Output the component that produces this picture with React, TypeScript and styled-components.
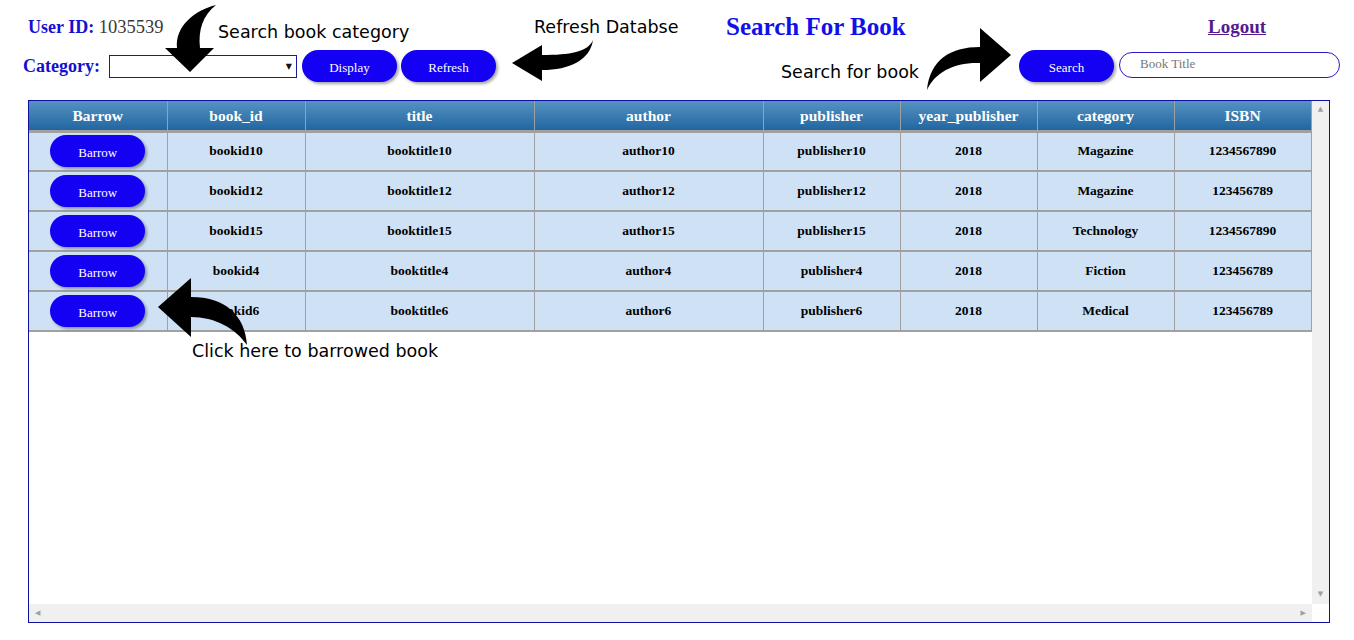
import React from "react";
import styled, { createGlobalStyle } from "styled-components";

const Global = createGlobalStyle`
  html, body { margin: 0; padding: 0; background: #ffffff; }
  body { font-family: "Liberation Serif", "Times New Roman", serif; }
  * { box-sizing: border-box; }
`;

const Page = styled.div`
  position: relative;
  width: 1354px;
  height: 640px;
  overflow: hidden;
`;

const Header = styled.header`
  display: grid;
  grid-template-rows: 50px 32px;
`;

const TopRow = styled.div`
  display: grid;
  grid-template-columns: 726px 482px 1fr;
  align-items: center;
  padding-top: 4px;
`;

const UserId = styled.div`
  padding-left: 28px;
  font-size: 18.5px;
  color: #3a3a3a;
`;

const BlueLabel = styled.span`
  color: #1410d0;
  font-weight: bold;
  font-size: 18px;
`;

const Title = styled.h1`
  margin: 0;
  font-size: 25px;
  font-weight: bold;
  color: #1010e8;
`;

const Logout = styled.a`
  font-size: 19px;
  font-weight: bold;
  color: #551a8b;
  text-decoration: underline;
`;

const ControlRow = styled.div`
  display: flex;
  align-items: center;
  padding: 0 14px 0 23px;
`;

const SelectBox = styled.div`
  margin-left: 9px;
  width: 188px;
  height: 23px;
  border: 1px solid #1a1a9a;
  background: #fff;
  display: flex;
  justify-content: flex-end;
  align-items: center;
  padding-right: 4px;
  font-family: "DejaVu Sans", sans-serif;
  font-size: 8px;
  color: #111;
`;

const PillButton = styled.button<{ $gap?: number }>`
  margin-left: ${(p) => p.$gap ?? 0}px;
  width: 95px;
  height: 32px;
  border: none;
  border-radius: 16px;
  background: #1400f2;
  color: #ffffff;
  font-family: "Liberation Serif", serif;
  font-size: 13px;
  padding-top: 4px;
  box-shadow: 2px 2px 3px rgba(0, 0, 0, 0.35);
  cursor: pointer;
`;

const RightGroup = styled.div`
  margin-left: auto;
  display: flex;
  align-items: center;
`;

const TitleInput = styled.input`
  margin-left: 5px;
  margin-top: -2px;
  width: 221px;
  height: 26px;
  border: 1px solid #2a1ac8;
  border-radius: 13px;
  padding: 0 0 2px 20px;
  font-family: "Liberation Serif", serif;
  font-size: 13px;
  outline: none;
  &::placeholder { color: #777; }
`;

const TableBox = styled.div`
  margin: 18px 0 0 28px;
  width: 1302px;
  height: 523px;
  border: 1px solid #1010a0;
  display: grid;
  grid-template-columns: 1fr 17px;
  grid-template-rows: 1fr 18px;
`;

const Viewport = styled.div`
  overflow: hidden;
`;

const Table = styled.table`
  border-collapse: collapse;
  table-layout: fixed;
  width: 1282px;
`;

const Th = styled.th`
  height: 30px;
  padding: 2px 0 0;
  background: linear-gradient(#5592c2, #2266a0);
  color: #ffffff;
  font-size: 15.5px;
  font-weight: bold;
  text-align: center;
  border-right: 1px solid #a0a0a0;
  border-bottom: 3px solid #a0a0a0;
`;

const Td = styled.td`
  height: 40px;
  padding: 0;
  background: #cfe2f5;
  color: #000;
  font-size: 13.5px;
  font-weight: bold;
  text-align: center;
  border-right: 1px solid #a0a0a0;
  border-bottom: 2px solid #a0a0a0;
`;

const VScroll = styled.div`
  background: #f0f0f0;
  display: flex;
  flex-direction: column;
  justify-content: space-between;
  align-items: center;
  padding: 4px 0 6px;
  font-family: "DejaVu Sans", sans-serif;
  font-size: 7px;
  color: #a0a0a0;
`;

const HScroll = styled.div`
  background: #f0f0f0;
  display: flex;
  justify-content: space-between;
  align-items: center;
  padding: 0 6px;
  font-family: "DejaVu Sans", sans-serif;
  font-size: 7px;
  color: #a0a0a0;
`;

const Corner = styled.div`
  background: #ffffff;
`;

const Note = styled.div<{ $x: number; $y: number }>`
  position: absolute;
  left: ${(p) => p.$x}px;
  top: ${(p) => p.$y}px;
  font-family: "DejaVu Sans", Verdana, sans-serif;
  font-size: 17.5px;
  line-height: 22px;
  color: #000;
  white-space: nowrap;
`;

const ArrowLayer = styled.svg`
  position: absolute;
  left: 0;
  top: 0;
  pointer-events: none;
`;

const columns = [
  { key: "Barrow", w: 138 },
  { key: "book_id", w: 138 },
  { key: "title", w: 229 },
  { key: "author", w: 229 },
  { key: "publisher", w: 137 },
  { key: "year_publisher", w: 137 },
  { key: "category", w: 137 },
  { key: "ISBN", w: 137 },
];

const rows = [
  ["bookid10", "booktitle10", "author10", "publisher10", "2018", "Magazine", "1234567890"],
  ["bookid12", "booktitle12", "author12", "publisher12", "2018", "Magazine", "123456789"],
  ["bookid15", "booktitle15", "author15", "publisher15", "2018", "Technology", "1234567890"],
  ["bookid4", "booktitle4", "author4", "publisher4", "2018", "Fiction", "123456789"],
  ["bookid6", "booktitle6", "author6", "publisher6", "2018", "Medical", "123456789"],
];

export default function App() {
  return (
    <Page>
      <Global />
      <Header>
        <TopRow>
          <UserId>
            <BlueLabel>User ID:</BlueLabel> 1035539
          </UserId>
          <Title>Search For Book</Title>
          <Logout href="#">Logout</Logout>
        </TopRow>
        <ControlRow>
          <BlueLabel>Category:</BlueLabel>
          <SelectBox>▼</SelectBox>
          <PillButton $gap={5}>Display</PillButton>
          <PillButton $gap={4}>Refresh</PillButton>
          <RightGroup>
            <PillButton>Search</PillButton>
            <TitleInput placeholder="Book Title" />
          </RightGroup>
        </ControlRow>
      </Header>
      <TableBox>
        <Viewport>
          <Table>
            <colgroup>
              {columns.map((c) => (
                <col key={c.key} style={{ width: c.w }} />
              ))}
            </colgroup>
            <thead>
              <tr>
                {columns.map((c) => (
                  <Th key={c.key}>{c.key}</Th>
                ))}
              </tr>
            </thead>
            <tbody>
              {rows.map((r) => (
                <tr key={r[0]}>
                  <Td>
                    <PillButton>Barrow</PillButton>
                  </Td>
                  {r.map((v, i) => (
                    <Td key={i}>{v}</Td>
                  ))}
                </tr>
              ))}
            </tbody>
          </Table>
        </Viewport>
        <VScroll>
          <span>▲</span>
          <span>▼</span>
        </VScroll>
        <HScroll>
          <span>◀</span>
          <span>▶</span>
        </HScroll>
        <Corner />
      </TableBox>

      <Note $x={218} $y={21}>Search book category</Note>
      <Note $x={534} $y={16}>Refresh Databse</Note>
      <Note $x={781} $y={61}>Search for book</Note>
      <Note $x={192} $y={340}>Click here to barrowed book</Note>

      <ArrowLayer width={1354} height={640} viewBox="0 0 1354 640">
        <path d="M 216 5 C 195 10, 175 26, 177 48 L 165 48 L 190 72 L 214 48 L 200 48 C 198 30, 203 15, 216 5 Z" fill="#000" />
        <path d="M 593 40 C 588 52, 570 55, 542 55 L 542 45 L 512 63 L 542 81 L 542 70 C 570 70, 590 60, 593 40 Z" fill="#000" />
        <path d="M 927 90 C 930 60, 950 47, 980 47 L 980 28 L 1011 55 L 980 82 L 980 63 C 955 62, 935 72, 927 90 Z" fill="#000" />
        <path d="M 247 345 C 245 315, 225 297, 191 297 L 191 278 L 158 307 L 191 337 L 191 317 C 215 317, 235 328, 247 345 Z" fill="#000" />
      </ArrowLayer>
    </Page>
  );
}
